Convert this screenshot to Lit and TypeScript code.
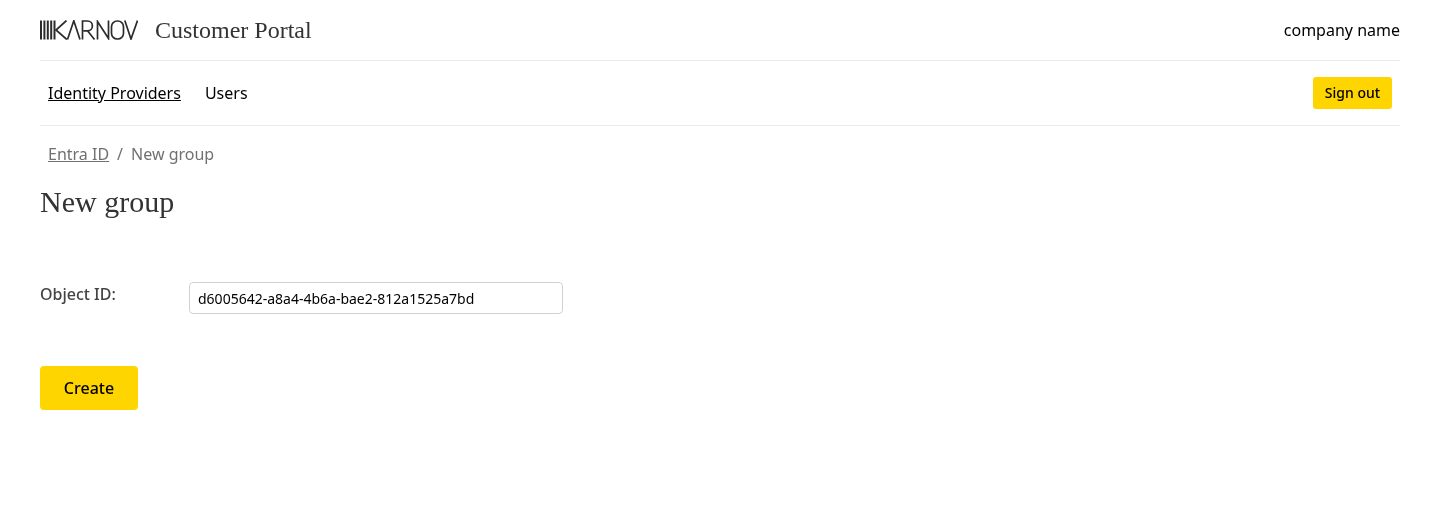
import { LitElement, html, css } from "lit";
import { customElement } from "lit/decorators.js";

@customElement("app-root")
export class AppRoot extends LitElement {
  static styles = css`
    :host { display: block; font-family: "Noto Sans", sans-serif; font-size: 16px; color: #000; min-height: 511px; padding: 0 40px; box-sizing: border-box; will-change: transform; }
    .top { display: flex; align-items: center; justify-content: space-between; height: 60px; border-bottom: 1px solid #ebebeb; }
    .brand { display: flex; align-items: center; gap: 17px; }
    .logo { display: block; width: 98px; height: 20px; }
    .title { font-family: "Liberation Serif", serif; font-size: 24px; color: #333; line-height: 32px; }
    .nav { display: flex; align-items: center; justify-content: space-between; height: 64px; border-bottom: 1px solid #ebebeb; padding: 0 8px; }
    .links { display: flex; gap: 24px; }
    a { color: inherit; }
    .links a { text-decoration: none; color: #000; line-height: 24px; }
    .links a.active { text-decoration: underline; }
    button { font-family: inherit; border: 0; background: #ffd500; color: #000; border-radius: 3px; font-weight: 500; padding: 0; }
    .signout { width: 79px; height: 32px; font-size: 14px; padding-bottom: 2px; }
    .crumbs { display: flex; gap: 8px; padding: 16px 8px 0; color: #707070; line-height: 24px; }
    h1 { margin: 0; font-family: "Liberation Serif", serif; font-weight: 400; font-size: 30px; line-height: 40px; color: #333; padding-top: 16px; }
    .row { display: flex; align-items: flex-start; margin-top: 60px; }
    label { width: 149px; font-weight: 500; color: #444; line-height: 24px; }
    input { box-sizing: border-box; width: 374px; height: 32px; border: 1px solid #d1d1d1; border-radius: 4px; padding: 0 8px; font: 14px "Noto Sans", sans-serif; color: #000; background: #fff; outline: none; }
    .create { display: block; width: 98px; height: 44px; margin-top: 52px; font-size: 16px; border-radius: 4px; }
  `;

  render() {
    return html`
      <div class="top">
        <div class="brand">
          <svg class="logo" viewBox="0 0 98 20" fill="none" stroke="#2b2b2b" stroke-width="1.700" aria-label="Karnov">
            <path stroke-width="2" d="M1 .5v19M4.400 .5v19M7.800 .5v19M11.200 .5v19M14.500 .5v19" />
            <path d="M26.500 .5 16 10l10.800 9.500" />
            <path d="M27.500 19.500 33.800 .8 40 19.500" />
            <path d="M42.500 19.500V1h5a4.800 4.800 0 0 1 0 9.800h-4M47.500 10.800 54.500 19.500" />
            <path d="M57.500 19.500V1.500L68.500 18.500V.5" />
            <rect x="71.500" y="1" width="12" height="18" rx="5.800" />
            <path d="M84.800 .5l6.200 18.500L97.500 .5" />
          </svg>
          <span class="title">Customer Portal</span>
        </div>
        <span>company name</span>
      </div>
      <div class="nav">
        <div class="links">
          <a class="active" href="#">Identity Providers</a>
          <a href="#">Users</a>
        </div>
        <button class="signout">Sign out</button>
      </div>
      <div class="crumbs"><a href="#">Entra ID</a><span>/</span><span>New group</span></div>
      <h1>New group</h1>
      <div class="row">
        <label for="oid">Object ID:</label>
        <input id="oid" .value=${"d6005642-a8a4-4b6a-bae2-812a1525a7bd"} />
      </div>
      <button class="create">Create</button>
    `;
  }
}
